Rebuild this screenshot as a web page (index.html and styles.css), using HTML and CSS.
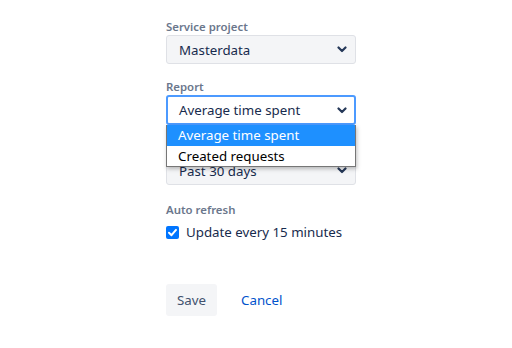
FILE: index.html
```html
<!DOCTYPE html>
<html>
<head>
<meta charset="utf-8">
<link rel="stylesheet" href="styles.css">
</head>
<body>
<form class="form">
  <div class="field">
    <div class="label">Service project</div>
    <div class="select"><span>Masterdata</span><svg class="chev" width="10" height="7" viewBox="0 0 10 7"><path d="M1.5 1.5 L5 5 L8.5 1.5" fill="none" stroke="#253858" stroke-width="2.2" stroke-linecap="round" stroke-linejoin="round"/></svg></div>
  </div>
  <div class="field">
    <div class="label">Report</div>
    <div class="select-wrap">
      <div class="select focused"><span>Average time spent</span><svg class="chev" width="10" height="7" viewBox="0 0 10 7"><path d="M1.5 1.5 L5 5 L8.5 1.5" fill="none" stroke="#253858" stroke-width="2.2" stroke-linecap="round" stroke-linejoin="round"/></svg></div>
      <ul class="menu">
        <li class="opt active">Average time spent</li>
        <li class="opt">Created requests</li>
      </ul>
    </div>
  </div>
  <div class="field">
    <div class="label">Period</div>
    <div class="select"><span>Past 30 days</span><svg class="chev" width="10" height="7" viewBox="0 0 10 7"><path d="M1.5 1.5 L5 5 L8.5 1.5" fill="none" stroke="#253858" stroke-width="2.2" stroke-linecap="round" stroke-linejoin="round"/></svg></div>
  </div>
  <div class="field refresh">
    <div class="label">Auto refresh</div>
    <label class="check"><span class="box"><svg width="13" height="13" viewBox="0 0 13 13"><rect x="0" y="0" width="13" height="13" rx="2" fill="#0075ff"/><path d="M3 6.8 L5.5 9.2 L10 3.9" fill="none" stroke="#fff" stroke-width="2" stroke-linecap="round" stroke-linejoin="round"/></svg></span>Update every 15 minutes</label>
  </div>
  <div class="actions">
    <button type="button" class="btn">Save</button>
    <a class="link" href="#">Cancel</a>
  </div>
</form>
</body>
</html>
```
FILE: styles.css
```css
html, body {
  margin: 0;
  padding: 0;
  background: #fff;
}
body {
  font-family: "Noto Sans", "Open Sans", sans-serif;
  color: #172b4d;
}
.form {
  width: 190px;
  margin-left: 166px;
  padding-top: 17px;
}
.field {
  margin-bottom: 13px;
}
.field.refresh {
  margin-top: 15px;
  margin-bottom: 0;
}
.label {
  font-size: 11.4px;
  font-weight: 600;
  color: #6b778c;
  line-height: 16px;
  padding-top: 2px;
}
.select-wrap {
  position: relative;
}
.select {
  box-sizing: border-box;
  height: 29px;
  border: 1px solid #dfe1e6;
  border-radius: 3px;
  background: #f4f5f7;
  display: flex;
  align-items: center;
  justify-content: space-between;
  padding: 0 8px 0 12px;
  font-size: 13.3px;
  color: #172b4d;
}
.select.focused {
  border: 2px solid #4c9aff;
  background: #fff;
  padding-left: 11px;
  padding-right: 7px;
  height: 30px;
}
.menu {
  position: absolute;
  left: 0;
  top: 30px;
  width: 190px;
  box-sizing: border-box;
  margin: 0;
  padding: 0;
  list-style: none;
  background: #fff;
  border: 1px solid #767676;
  border-top: none;
  box-shadow: 1px 2px 4px rgba(0,0,0,0.25);
  z-index: 2;
}
.opt {
  height: 20px;
  line-height: 20px;
  padding-left: 11px;
  font-size: 13.3px;
  color: #000;
}
.opt.active {
  height: 21px;
  line-height: 21px;
  background: #1e90ff;
  color: #fff;
}
.check {
  display: flex;
  align-items: center;
  gap: 7px;
  font-size: 13.3px;
  color: #172b4d;
  height: 20px;
  margin-top: 4px;
}
.box {
  display: flex;
}
.actions {
  display: flex;
  align-items: center;
  gap: 24px;
  margin-top: 42px;
}
.btn {
  font-family: inherit;
  font-size: 13.3px;
  color: #42526e;
  background: #f4f5f7;
  border: none;
  border-radius: 3px;
  height: 32px;
  padding: 0 11px;
}
.link {
  font-size: 13.3px;
  color: #0052cc;
  text-decoration: none;
}
```
